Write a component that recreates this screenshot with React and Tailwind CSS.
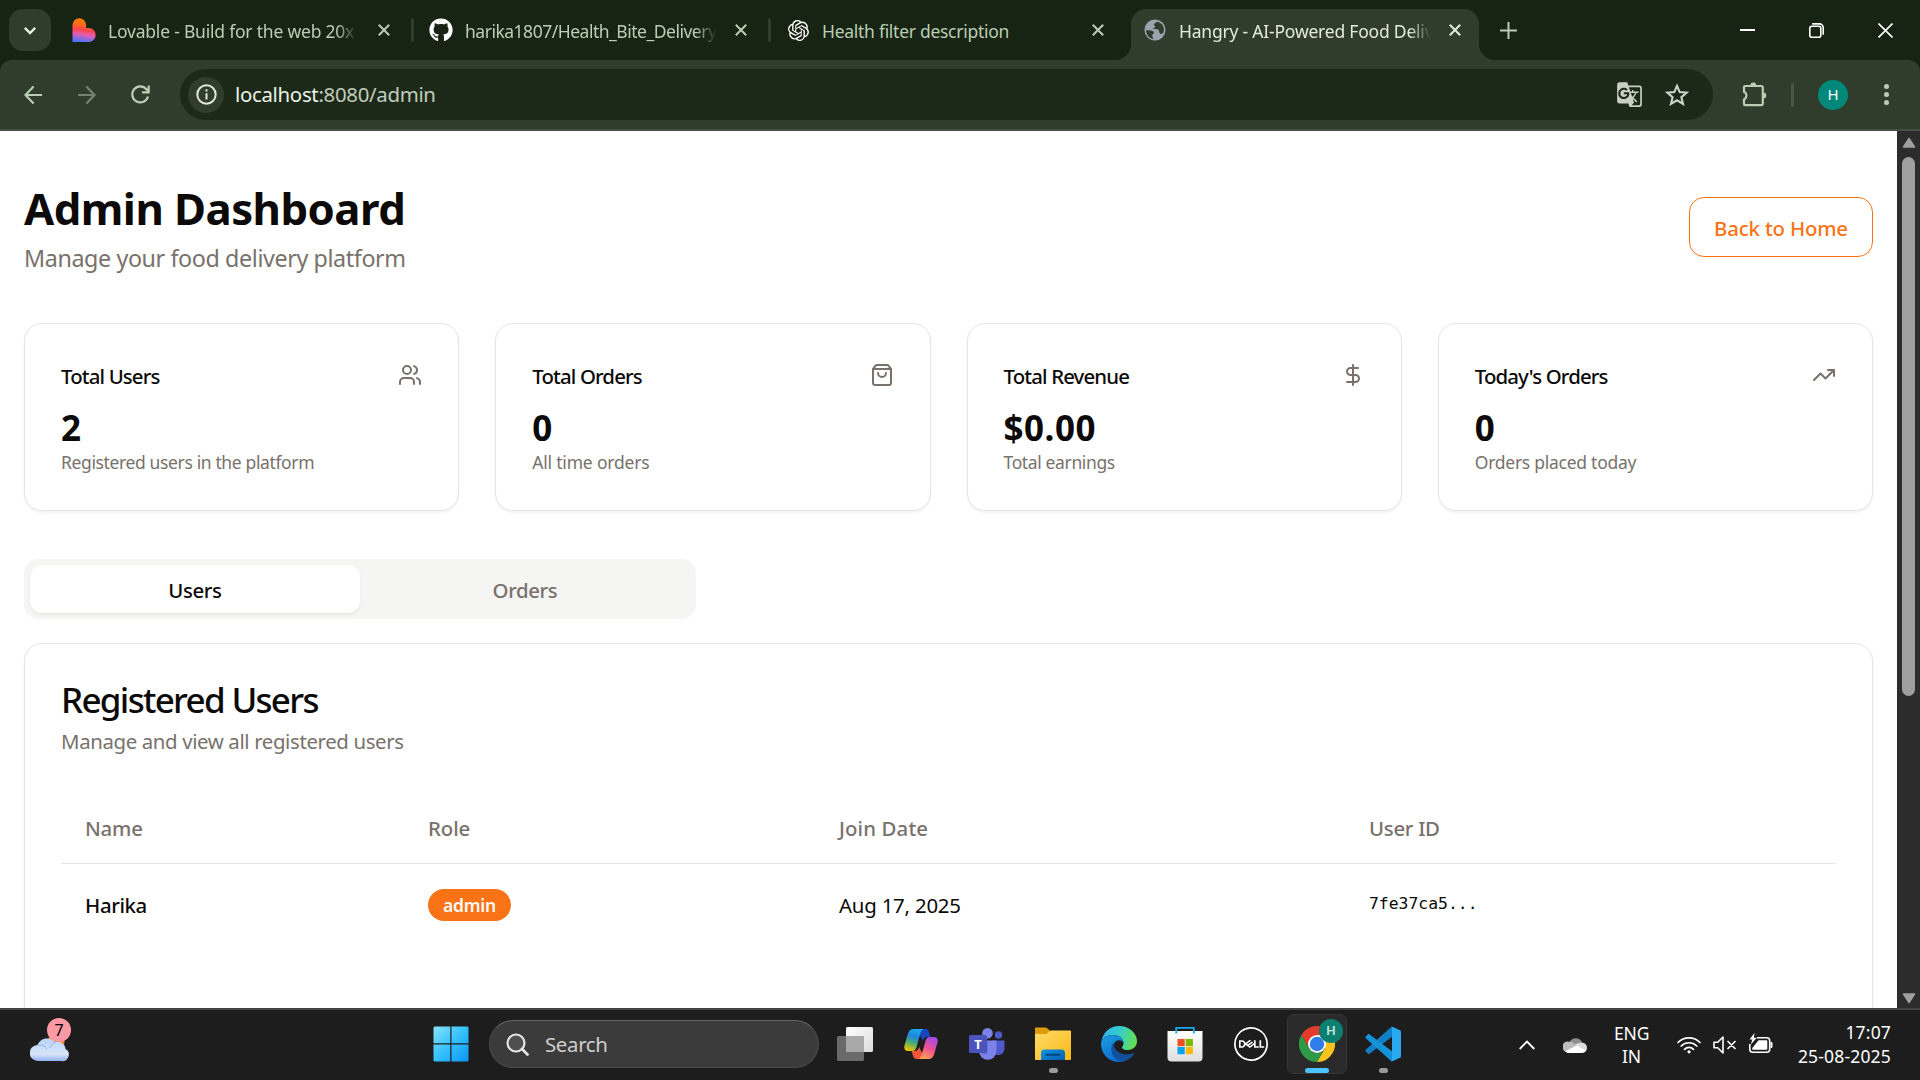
import { Users, ShoppingBag, DollarSign, TrendingUp } from "lucide-react";
import { SiOpenai, SiDell } from "react-icons/si";
import { FaGithub } from "react-icons/fa";
import { MdGTranslate } from "react-icons/md";
import clsx from "clsx";

/* ---------- Browser chrome ---------- */

function LovableIcon() {
  return (
    <svg viewBox="0 0 24 24" className="h-6 w-6 shrink-0">
      <defs>
        <linearGradient id="lov" x1="0.55" y1="0" x2="0.4" y2="1">
          <stop offset="0" stopColor="#ff8000" />
          <stop offset="0.3" stopColor="#ff6a1a" />
          <stop offset="0.5" stopColor="#ff4350" />
          <stop offset="0.68" stopColor="#e45fb0" />
          <stop offset="1" stopColor="#4b73ff" />
        </linearGradient>
      </defs>
      <path d="M0.5 7a6.8 6.8 0 0 1 13.6 0v3h2.6a7 7 0 0 1 0 14H0.5z" fill="url(#lov)" />
    </svg>
  );
}

function GlobeIcon() {
  return (
    <svg viewBox="0 0 24 24" className="h-[22px] w-[22px] shrink-0">
      <circle cx="12" cy="12" r="11.5" fill="#9ba3ad" />
      <path
        d="M2.3 12.2c3 .2 6.500-.2 8 1.300 1 1.200.3 2.600-.6 3.100-.9.500-.7 1.900-.4 3l1 2.200C5.800 21.200 2.400 17.200 2.300 12.200zM14 2.600c-.4 1.800-2.800 1.400-3.200 3.200-.3 1.500 1.600 1.200 1.500 2.600-.1 1.500-2.300 1.100-2.300 2.600 2.200.2 4.600-.4 5.900 1.100 1.200 1.500.2 3.300 1.800 4.100 1.300.6 2-.3 3.200-.8 2.500-5.200-.3-11.200-6.900-12.800z"
        fill="#303d2d"
      />
    </svg>
  );
}

function CloseGlyph({ className }) {
  return (
    <svg viewBox="0 0 12 12" className={clsx("h-3 w-3 shrink-0", className)} fill="none" stroke="currentColor" strokeWidth="2">
      <path d="M0.8 0.8l10.400 10.400M11.200 0.800L0.800 11.200" />
    </svg>
  );
}

function TabTitle({ children, fade, className }) {
  return (
    <span
      className={clsx(
        "min-w-0 flex-1 overflow-hidden pt-0.5 whitespace-nowrap text-[17.5px] leading-7",
        fade && "[mask-image:linear-gradient(to_right,black_calc(100%-22px),transparent)]",
        className
      )}
    >
      {children}
    </span>
  );
}

function Divider() {
  return <div className="h-6 w-[3px] shrink-0 rounded-full bg-[#303d2d]" />;
}

function TabStrip() {
  return (
    <div className="flex h-[60px] shrink-0 bg-[#172313] text-[#b9ceb2]">
      <div className="mt-[9px] ml-[9px] flex h-[42px] w-[42px] shrink-0 items-center justify-center rounded-[14px] bg-[#303d2d] text-[#e4eedf]">
        <svg viewBox="0 0 12 8" className="mt-px h-2 w-3" fill="none" stroke="currentColor" strokeWidth="2.400">
          <path d="M0.800 0.900L6 6.100l5.200-5.200" />
        </svg>
      </div>
      <div className="flex w-[360px] shrink-0 items-center pl-[21px]">
        <LovableIcon />
        <TabTitle fade className="ml-3 max-w-[250px] tracking-[-0.012em]">Lovable - Build for the web 20x</TabTitle>
        <CloseGlyph className="ml-5" />
      </div>
      <div className="flex items-center"><Divider /></div>
      <div className="flex w-[354px] shrink-0 items-center pl-[15px]">
        <FaGithub className="h-6 w-6 shrink-0 text-white" />
        <TabTitle fade className="ml-3 max-w-[252px] tracking-[-0.028em]">harika1807/Health_Bite_Delivery</TabTitle>
        <CloseGlyph className="ml-[18px]" />
      </div>
      <div className="flex items-center"><Divider /></div>
      <div className="flex w-[345px] shrink-0 items-center pl-[17px]">
        <SiOpenai className="h-[21px] w-[21px] shrink-0 text-white" />
        <TabTitle className="ml-[13px] max-w-[270px] tracking-[-0.016em]">Health filter description</TabTitle>
        <CloseGlyph />
      </div>
      <div className="flex items-end">
        <div className="h-[15px] w-[15px] bg-[radial-gradient(circle_at_0_0,transparent_14.500px,#303d2d_15px)]" />
        <div className="flex h-[51px] w-[348px] items-center rounded-t-[15px] bg-[#303d2d] pb-[9px] pl-[13px] text-[#e0ebdb]">
          <GlobeIcon />
          <TabTitle fade className="ml-[13px] max-w-[252px] tracking-[-0.012em]">Hangry - AI-Powered Food Deliv</TabTitle>
          <CloseGlyph className="ml-[18px]" />
        </div>
        <div className="h-[15px] w-[15px] bg-[radial-gradient(circle_at_100%_0,transparent_14.500px,#303d2d_15px)]" />
      </div>
      <div className="flex flex-1 items-center pl-[6px]">
        <svg viewBox="0 0 17 17" className="h-[17px] w-[17px]" fill="none" stroke="currentColor" strokeWidth="2">
          <path d="M8.500 0v17M0 8.500h17" />
        </svg>
      </div>
      <div className="mr-[27px] flex items-center gap-[54px] text-white">
        <div className="h-[2px] w-[15px] bg-white" />
        <svg viewBox="0 0 15 15" className="h-[15px] w-[15px]" fill="none" stroke="currentColor" strokeWidth="1.600">
          <rect x="0.800" y="3.200" width="11" height="11" rx="2" />
          <path d="M3.200 0.900h7.300a3.700 3.700 0 0 1 3.700 3.700v7.200" />
        </svg>
        <svg viewBox="0 0 15 15" className="h-[15px] w-[15px]" fill="none" stroke="currentColor" strokeWidth="1.600">
          <path d="M0.500 0.500l14 14M14.500 0.500l-14 14" />
        </svg>
      </div>
    </div>
  );
}

function Toolbar() {
  return (
    <div className="shrink-0 bg-[#172313]">
      <div className="flex h-[71px] items-center rounded-t-[12px] border-b-2 border-[#445041] bg-[#303d2d] text-[#b9ceb2]">
        <svg viewBox="0 0 18 20" className="ml-6 h-5 w-[18px]" fill="none" stroke="currentColor" strokeWidth="2.200">
          <path d="M18 10H1.800M9.600 1.600L1.500 10l8.100 8.400" />
        </svg>
        <svg viewBox="0 0 18 20" className="ml-9 h-5 w-[18px] text-[#76836f]" fill="none" stroke="currentColor" strokeWidth="2.200">
          <path d="M0 10h16.200M8.400 1.600l8.100 8.400-8.100 8.400" />
        </svg>
        <svg viewBox="0 0 19 19" className="ml-[35px] h-[19px] w-[19px]" fill="none" stroke="currentColor" strokeWidth="2.200">
          <path d="M17 11.500A8 8 0 1 1 15.500 4.300L17.600 7M17.700 0.500V7.300H11" />
        </svg>
        <div className="ml-[30px] flex h-[51px] w-[1533px] items-center rounded-full bg-[#1c2919] pl-2">
          <div className="flex h-9 w-9 items-center justify-center rounded-full bg-[#303d2d] text-[#dfe8da]">
            <svg viewBox="0 0 21 21" className="h-[21px] w-[21px]" fill="none" stroke="currentColor" strokeWidth="2">
              <circle cx="10.500" cy="10.500" r="9.200" />
              <path d="M10.500 9.300v6.200M10.500 5.300v2.200" />
            </svg>
          </div>
          <div className="ml-[11px] flex-1 text-[20.400px] tracking-[-0.015em] text-[#c1ccbc]">
            <span className="text-[#eaf3e5]">localhost</span>:8080/admin
          </div>
          <MdGTranslate className="h-[27px] w-[27px] text-[#c7cfc2]" />
          <svg viewBox="0 0 24 23" className="mr-[24px] ml-[22px] h-[23px] w-6" fill="none" stroke="#cdd5c8" strokeWidth="2.100">
            <path d="M12 2.800l2.700 6.300 6.900.6-5.200 4.500 1.600 6.700L12 17.300l-6 3.600 1.600-6.700-5.200-4.500 6.900-.6z" />
          </svg>
        </div>
        <svg viewBox="0 0 25 25" className="ml-[29px] h-[25px] w-[25px] shrink-0" fill="none" stroke="currentColor" strokeWidth="2.200">
          <path d="M3.200 4h16a1.600 1.600 0 0 1 1.600 1.600v16a1.600 1.600 0 0 1-1.600 1.600h-16a1.200 1.200 0 0 1-1.200-1.200v-4.600a4.200 4.200 0 0 0 0-7.600V5.200A1.200 1.200 0 0 1 3.200 4z" />
          <path d="M8.300 3.500a3 3 0 0 1 6 0zM21.300 10.500a3 3 0 0 1 0 6z" fill="currentColor" stroke="none" />
        </svg>
        <div className="ml-6 h-6 w-[3px] shrink-0 rounded-full bg-[#48573f]" />
        <div className="ml-6 flex h-[30px] w-[30px] shrink-0 items-center justify-center rounded-full bg-[#00897b] text-[15px] text-white">H</div>
        <div className="ml-9 flex flex-col gap-[3px]">
          <i className="h-[5px] w-[5px] rounded-full bg-[#b9ceb2]" />
          <i className="h-[5px] w-[5px] rounded-full bg-[#b9ceb2]" />
          <i className="h-[5px] w-[5px] rounded-full bg-[#b9ceb2]" />
        </div>
      </div>
    </div>
  );
}

/* ---------- Admin page ---------- */

const stats = [
  { title: "Total Users", value: "2", note: "Registered users in the platform", Icon: Users, track: "tracking-[-0.021em]" },
  { title: "Total Orders", value: "0", note: "All time orders", Icon: ShoppingBag, track: "tracking-[-0.011em]" },
  { title: "Total Revenue", value: "$0.00", note: "Total earnings", Icon: DollarSign, track: "tracking-[-0.021em]" },
  { title: "Today's Orders", value: "0", note: "Orders placed today", Icon: TrendingUp, track: "tracking-[-0.015em]" },
];

function StatCard({ title, value, note, Icon, track }) {
  return (
    <div className="h-[188px] rounded-[18px] border border-[#e6e5e4] bg-white px-9 pt-9 shadow-[0_1.500px_3px_rgba(0,0,0,0.05)]">
      <div className="flex h-[30px] items-center justify-between">
        <h3 className="pt-0.5 text-[20.400px] font-medium tracking-[-0.042em]">{title}</h3>
        <Icon className="h-6 w-6 text-[#78716c]" />
      </div>
      <div className="mt-[14px] text-[35px] leading-[48px] font-bold tracking-[0.015em]">{value}</div>
      <p className={clsx("-mt-0.5 text-[17.500px] leading-6 text-[#78716c]", track)}>{note}</p>
    </div>
  );
}

function AdminPage() {
  return (
    <main className="min-w-0 flex-1 overflow-hidden bg-white px-6 pt-12 text-[#0c0a09]">
      <header className="flex h-24 items-center justify-between">
        <div>
          <h1 className="pt-0.5 text-[43.700px] leading-[54px] font-bold tracking-[-0.012em]">Admin Dashboard</h1>
          <p className="mt-[5px] text-[23.300px] leading-9 tracking-[-0.017em] text-[#78716c]">Manage your food delivery platform</p>
        </div>
        <button className="h-[60px] w-[184px] rounded-[15px] border border-[#f97316] pt-0.5 text-[20.400px] font-medium tracking-[-0.009em] text-[#f97316]">
          Back to Home
        </button>
      </header>

      <section className="mt-12 grid grid-cols-4 gap-9">
        {stats.map((s) => (
          <StatCard key={s.title} {...s} />
        ))}
      </section>

      <div className="mt-12 grid h-[60px] w-[672px] grid-cols-2 rounded-[15px] bg-[#f5f5f4] p-1.5 text-[20.400px] font-medium tracking-[-0.019em]">
        <div className="flex items-center justify-center rounded-[12px] bg-white pt-0.5 shadow-[0_1.500px_3px_rgba(0,0,0,0.06)]">Users</div>
        <div className="flex items-center justify-center pt-0.5 text-[#78716c]">Orders</div>
      </div>

      <section className="mt-6 h-[420px] rounded-[18px] border border-[#e6e5e4] bg-white p-9 shadow-[0_1.500px_3px_rgba(0,0,0,0.05)]">
        <h2 className="pt-0.5 text-[35px] leading-9 font-medium tracking-[-0.048em]">Registered Users</h2>
        <p className="mt-2 text-[20.400px] leading-[30px] tracking-[-0.018em] text-[#78716c]">Manage and view all registered users</p>
        <table className="mt-[35px] w-full table-fixed text-left text-[20.400px]">
          <colgroup>
            <col className="w-[343px]" />
            <col className="w-[410px]" />
            <col className="w-[532px]" />
            <col />
          </colgroup>
          <thead>
            <tr className="h-[72px] border-b border-[#e6e5e4] text-[#78716c]">
              <th className="px-6 pt-[3px] font-medium tracking-[-0.010em]">Name</th>
              <th className="px-6 pt-[3px] font-medium tracking-[-0.004em]">Role</th>
              <th className="px-[25px] pt-[3px] font-medium tracking-[0.006em]">Join Date</th>
              <th className="px-[23px] pt-[3px] font-medium tracking-[-0.014em]">User ID</th>
            </tr>
          </thead>
          <tbody>
            <tr className="h-[83px]">
              <td className="px-6 pt-0.5 font-medium tracking-[-0.018em]">Harika</td>
              <td className="px-6">
                <span className="flex h-8 w-[83px] items-center justify-center rounded-full bg-[#f97316] text-[17.500px] font-semibold tracking-[-0.015em] text-[#fafaf9]">admin</span>
              </td>
              <td className="px-[25px] pt-0.5 tracking-[-0.010em]">Aug 17, 2025</td>
              <td className="px-[23px] font-['DejaVu_Sans_Mono',monospace] text-[16.400px]">7fe37ca5...</td>
            </tr>
          </tbody>
        </table>
      </section>
    </main>
  );
}

function Scrollbar() {
  return (
    <div className="flex w-[23px] shrink-0 flex-col items-center bg-[#2c2c2c] pt-1.5 pb-[4px]">
      <svg viewBox="0 0 14 11" className="h-[11px] w-[14px] shrink-0">
        <path d="M1.500 10L7 1.500 12.500 10z" fill="#9f9f9f" stroke="#9f9f9f" strokeWidth="1.500" strokeLinejoin="round" />
      </svg>
      <div className="mt-[9px] h-[539px] w-[13px] rounded-full bg-[#9f9f9f]" />
      <svg viewBox="0 0 14 11" className="mt-auto h-[11px] w-[14px] shrink-0">
        <path d="M1.500 1L7 9.500 12.500 1z" fill="#9f9f9f" stroke="#9f9f9f" strokeWidth="1.500" strokeLinejoin="round" />
      </svg>
    </div>
  );
}

/* ---------- Taskbar icons ---------- */

function WeatherIcon() {
  return (
    <div className="relative ml-[30px] h-[46px] w-[42px]">
      <svg viewBox="0 0 42 46" className="h-full w-full">
        <defs>
          <linearGradient id="cl" x1="0" y1="0" x2="0" y2="1">
            <stop offset="0" stopColor="#bcd4fa" />
            <stop offset="0.700" stopColor="#d7e4f9" />
            <stop offset="1" stopColor="#8db0f0" />
          </linearGradient>
        </defs>
        <circle cx="26" cy="26" r="8.500" fill="#f58220" />
        <path d="M8 45a8 8 0 0 1-.6-16A10.500 10.500 0 0 1 25 26a8 8 0 0 1 10.500 7A6.500 6.500 0 0 1 31 45z" fill="url(#cl)" />
        <path d="M8 29.500c3-1 7 0 9 3.500M20 32c.5-3 3-5.500 6-6" fill="none" stroke="#93b3ee" strokeWidth="1" />
      </svg>
      <span className="absolute top-0.5 left-[17px] flex h-6 w-6 items-center justify-center rounded-full bg-[#ff99a4] text-[16px] text-black">7</span>
    </div>
  );
}

function StartIcon() {
  return (
    <svg viewBox="0 0 36 36" className="h-9 w-9">
      <defs>
        <linearGradient id="win" x1="0" y1="0" x2="36" y2="36" gradientUnits="userSpaceOnUse">
          <stop offset="0" stopColor="#8ae3ff" />
          <stop offset="0.500" stopColor="#35c1fb" />
          <stop offset="1" stopColor="#0a93f8" />
        </linearGradient>
      </defs>
      <path d="M1.500 0.500h15.800v16.800H0.500V1.500zM18.500 0.500h16l1 1v15.800H18.500zM0.500 18.500h16.800v17H1.500l-1-1zM18.500 18.500h17v16l-1 1h-16z" fill="url(#win)" />
    </svg>
  );
}

function TaskViewIcon() {
  return (
    <svg viewBox="0 0 36 36" className="h-9 w-9">
      <defs>
        <linearGradient id="tv" x1="0" y1="0" x2="1" y2="1">
          <stop offset="0" stopColor="#fff" />
          <stop offset="1" stopColor="#dcdcdc" />
        </linearGradient>
      </defs>
      <rect x="9" y="1" width="27" height="25" rx="1.500" fill="url(#tv)" />
      <rect x="0" y="10" width="27" height="25" rx="1.500" fill="#6a6a6a" />
      <rect x="9" y="10" width="18" height="16" fill="#a9a9a9" />
    </svg>
  );
}

function CopilotIcon() {
  return (
    <svg viewBox="0 0 34 32" className="h-8 w-[34px]">
      <defs>
        <linearGradient id="cpA" x1="0.600" y1="0" x2="0.300" y2="1">
          <stop offset="0" stopColor="#1fa8ee" />
          <stop offset="0.350" stopColor="#1c84dc" />
          <stop offset="0.650" stopColor="#4fb06a" />
          <stop offset="1" stopColor="#f5c400" />
        </linearGradient>
        <linearGradient id="cpB" x1="0.700" y1="0" x2="0.300" y2="1">
          <stop offset="0" stopColor="#a14be8" />
          <stop offset="0.500" stopColor="#ee5092" />
          <stop offset="1" stopColor="#ffa353" />
        </linearGradient>
      </defs>
      <path d="M15 1h6.500c2 0 3 1.400 3.500 3l1.300 5h-2.500c-3 0-4.200 1.500-5 4L15.500 6z" fill="#1746c0" />
      <path d="M19 31h-6.500c-2 0-3-1.400-3.500-3l-1.300-5h2.500c3 0 4.200-1.500 5-4l3.300 7z" fill="#f2553a" />
      <path d="M9.500 1H20c-2 .5-3 2-3.600 4.200L12.500 19c-.8 2.800-2 4-4.500 4H4c-3 0-4.300-2.400-3.500-5.500L4 5.500C4.900 2.600 6.500 1 9.500 1z" fill="url(#cpA)" />
      <path d="M24.500 31H14c2-.5 3-2 3.600-4.200L21.500 13c.8-2.800 2-4 4.500-4h4c3 0 4.300 2.400 3.500 5.500L30 26.500c-.9 2.900-2.500 4.500-5.500 4.500z" fill="url(#cpB)" />
    </svg>
  );
}

function TeamsIcon() {
  return (
    <div className="relative h-[34px] w-9">
      <svg viewBox="0 0 36 34" className="h-full w-full">
        <circle cx="29.500" cy="8" r="3.700" fill="#5059c9" />
        <path d="M23 13.500h11.500c.6 0 1 .4 1 1V22a6.500 6.500 0 0 1-12.500 2z" fill="#5059c9" />
        <circle cx="18.500" cy="6.300" r="5.300" fill="#7b83eb" />
        <path d="M10 13.500h16.500c.6 0 1 .4 1 1V24a8.700 8.700 0 0 1-17.500 0z" fill="#7b83eb" />
        <path d="M12 13.500h7v13a1 1 0 0 1-1 1h-6z" fill="#5b63cf" opacity="0.500" />
        <rect x="0" y="8" width="18" height="18" rx="1.500" fill="#4b53bc" />
      </svg>
      <span className="absolute top-2 left-0 flex h-[18px] w-[18px] items-center justify-center text-[13px] leading-none font-bold text-white">T</span>
    </div>
  );
}

function ExplorerIcon() {
  return (
    <svg viewBox="0 0 36 34" className="h-[34px] w-9">
      <defs>
        <linearGradient id="fx" x1="0" y1="0" x2="1" y2="1">
          <stop offset="0" stopColor="#ffdc6b" />
          <stop offset="1" stopColor="#fbb814" />
        </linearGradient>
        <linearGradient id="fb" x1="0" y1="0" x2="1" y2="1">
          <stop offset="0" stopColor="#1394e4" />
          <stop offset="1" stopColor="#0560b0" />
        </linearGradient>
      </defs>
      <path d="M0 1.500C0 .9.400.5 1 .5h9.500c.6 0 1 .2 1.400.6L15.500 4v5H0z" fill="#dd9b0c" />
      <path d="M0 7h10.500c.9 0 1.600-.3 2.200-.9l2-2c.4-.4.900-.6 1.500-.6H35c.6 0 1 .4 1 1V32c0 .6-.4 1-1 1H1c-.6 0-1-.4-1-1z" fill="url(#fx)" />
      <path d="M6 33v-7a3.500 3.500 0 0 1 3.500-3.500h17A3.500 3.500 0 0 1 30 26v7z" fill="url(#fb)" />
      <rect x="10.500" y="26.700" width="15" height="2" rx="1" fill="#06467f" />
    </svg>
  );
}

function EdgeIcon() {
  return (
    <svg viewBox="0 0 36 36" className="h-9 w-9">
      <defs>
        <linearGradient id="eg1" x1="0" y1="0.400" x2="1" y2="0.600">
          <stop offset="0" stopColor="#2fb4ee" />
          <stop offset="0.500" stopColor="#38cfc6" />
          <stop offset="1" stopColor="#66e04c" />
        </linearGradient>
        <linearGradient id="eg2" x1="0" y1="0" x2="0.500" y2="1">
          <stop offset="0" stopColor="#1b9de2" />
          <stop offset="1" stopColor="#0c6fd0" />
        </linearGradient>
      </defs>
      <path d="M0.600 14.500C2.200 6 9.500 0 18 0c10.500 0 18 7.500 18 15 0 5.500-4 9-9 9-3.800 0-6-1.300-6-2.600 0-1 1.500-1.600 1.500-4.200 0-4-4-8.200-10.500-8.200-6 0-9.800 2.600-11.400 5.500z" fill="url(#eg1)" />
      <path d="M0 18c0-5.500 5-9 11.500-9 6 0 10.500 3.500 11 7.500-1-1.500-2.600-2.300-4.500-2.300-3.500 0-5.500 3-5.500 6.500 0 8 6 13.300 12.500 13.300-2 1.300-4.500 2-7 2C8 36 0 28 0 18z" fill="url(#eg2)" />
      <path d="M12.500 16.500C10.500 19 10 22 10.500 25c1 6 6 10.500 10.500 10.700 5-.7 9.500-3.700 12-8 .3-.6-.2-1-.8-.7-2 1-4 1.400-6.200 1.400-7 0-13.500-4-13.500-11.900z" fill="#11509a" />
    </svg>
  );
}

function StoreIcon() {
  return (
    <svg viewBox="0 0 36 36" className="h-9 w-9">
      <defs>
        <linearGradient id="st" x1="0" y1="0" x2="0" y2="1">
          <stop offset="0" stopColor="#fff" />
          <stop offset="1" stopColor="#dedede" />
        </linearGradient>
      </defs>
      <path d="M0.500 5h35v26.500a4 4 0 0 1-4 4h-27a4 4 0 0 1-4-4z" fill="url(#st)" />
      <path d="M9.200 7.500V1.800h17.600v5.700" fill="none" stroke="#1ba7ee" strokeWidth="1.800" />
      <rect x="10.500" y="13" width="7.200" height="7.200" fill="#f25022" />
      <rect x="18.700" y="13" width="7.200" height="7.200" fill="#7fba00" />
      <rect x="10.500" y="21" width="7.200" height="7.200" fill="#00a4ef" />
      <rect x="18.700" y="21" width="7.200" height="7.200" fill="#ffb900" />
    </svg>
  );
}

function ChromeIcon() {
  return (
    <div className="relative h-9 w-9">
      <svg viewBox="0 0 36 36" className="h-9 w-9">
        <path d="M18 9h15.600A18 18 0 0 0 2.400 9l7.800 13.500z" fill="#e33b2e" />
        <path d="M18 9h15.600A18 18 0 0 1 18 36l7.800-13.500z" fill="#fcc31e" />
        <path d="M25.800 22.500L18 36A18 18 0 0 1 2.400 9l7.800 13.500a9 9 0 0 0 15.600 0z" fill="#2c9a46" />
        <circle cx="18" cy="18" r="9" fill="#fff" />
        <circle cx="18" cy="18" r="7.200" fill="#2f7de9" />
      </svg>
      <span className="absolute -top-[7px] left-5 flex h-6 w-6 items-center justify-center rounded-full bg-[#0b8071] text-[13px] font-semibold text-[#c5e6e0]">H</span>
    </div>
  );
}

function VSCodeIcon() {
  return (
    <svg viewBox="0 0 36 36" className="h-9 w-9">
      <path d="M27 .3L1 23.600c-.9.800-.9 1.400-.2 2l2 1.900c.6.500 1.200.5 1.900.1L27 10.800z" fill="#1080c4" />
      <path d="M27 35.700L1 12.400c-.9-.8-.9-1.400-.2-2l2-1.900c.6-.5 1.200-.5 1.900-.1L27 25.200z" fill="#1492d8" />
      <path d="M26.300 0.200l8.200 3.700c.9.400 1.500 1.200 1.500 2.200v23.800c0 1-.6 1.800-1.500 2.200l-8.200 3.700c-.3.100.7-.4.700-1.600V1.800c0-1.200-1-1.700-.7-1.600z" fill="#28a9f2" />
    </svg>
  );
}

const apps = [
  { id: "taskview", Icon: TaskViewIcon },
  { id: "copilot", Icon: CopilotIcon },
  { id: "teams", Icon: TeamsIcon },
  { id: "explorer", Icon: ExplorerIcon, open: true },
  { id: "edge", Icon: EdgeIcon },
  { id: "store", Icon: StoreIcon },
  { id: "dell", Icon: () => <SiDell className="h-[34px] w-[34px] text-white" /> },
  { id: "chrome", Icon: ChromeIcon, active: true },
  { id: "vscode", Icon: VSCodeIcon, open: true },
];

function Taskbar() {
  return (
    <div className="flex h-[72px] shrink-0 items-center border-t-2 border-[#434343] bg-[#1d1d1d] text-[17.500px] text-white">
      <div className="flex w-[433px] self-start pt-[6px]">
        <WeatherIcon />
      </div>
      <div className="flex items-center pb-0.5">
        <StartIcon />
        <div className="ml-5 flex h-12 w-[330px] items-center rounded-full border-[1.500px] border-[#4a4a4a] border-t-[#646464] bg-[#3b3b3b] pl-4">
          <svg viewBox="0 0 23 23" className="h-[23px] w-[23px]" fill="none" stroke="#e6e6e6" strokeWidth="2.200">
            <circle cx="10" cy="10" r="8.500" fill="#4f4f4f" />
            <path d="M16 16l5.500 5.500" strokeLinecap="round" strokeWidth="2.800" />
          </svg>
          <span className="ml-4 text-[20.400px] tracking-[-0.016em] text-[#cfcfcf]">Search</span>
        </div>
      </div>
      <div className="ml-[3px] flex h-full">
        {apps.map(({ id, Icon, open, active }) => (
          <div key={id} className="flex w-[66px] items-start justify-center pt-1">
            <div
              className={clsx(
                "relative flex h-[60px] w-[60px] items-center justify-center rounded-[7px]",
                active && "border border-[#373737] bg-[#2a2a2a]"
              )}
            >
              <Icon />
              {open && <i className="absolute bottom-[1px] h-[5px] w-[9px] rounded-full bg-[#9a9a9a]" />}
              {active && <i className="absolute bottom-0 h-[5px] w-6 rounded-full bg-[#4cc2ff]" />}
            </div>
          </div>
        ))}
      </div>
      <div className="ml-auto flex items-center pb-px">
        <svg viewBox="0 0 16 10" className="h-[10px] w-4" fill="none" stroke="white" strokeWidth="1.800">
          <path d="M0.700 9L8 1.500 15.300 9" />
        </svg>
        <svg viewBox="0 0 24 16" className="ml-7 h-4 w-6">
          <path d="M6.500 5a7 7 0 0 1 12.800.8L10 12z" fill="#8e8e8e" />
          <path d="M5.500 4.700c2-.2 3.500.4 5 1.300l5 3-12 6A5.200 5.200 0 0 1 5.500 4.700z" fill="#bdbdbd" />
          <path d="M19 5.800c3 0 5 2.300 5 5 0 1.300-.4 2.300-1 3L12 7.500c2.500-1.300 4.500-1.800 7-1.700z" fill="#dcdcdc" />
          <path d="M2.200 14.200L14 8.200l9.300 5.300c-.9 1.500-2.400 2.500-4.300 2.500H5.500c-1.300 0-2.400-.7-3.300-1.800z" fill="#fff" />
        </svg>
        <div className="ml-[27px] w-[35px] text-center leading-[23px] tracking-[-0.010em]">
          <div>ENG</div>
          <div>IN</div>
        </div>
        <svg viewBox="0 0 24 18" className="ml-[28px] h-[18px] w-6" fill="none" stroke="white" strokeWidth="1.700" strokeLinecap="round">
          <path d="M1 6.500a15.500 15.500 0 0 1 22 0M4.200 10a11 11 0 0 1 15.600 0M7.500 13.300a6.400 6.400 0 0 1 9 0" />
          <circle cx="12" cy="15.800" r="1.600" fill="white" stroke="none" />
        </svg>
        <svg viewBox="0 0 24 18" className="ml-3 h-[18px] w-6" fill="none" stroke="white" strokeWidth="1.600" strokeLinejoin="round">
          <path d="M1 6.200h3.700L10 1v16l-5.300-5.200H1zM14.500 5l8 8M22.500 5l-8 8" />
        </svg>
        <svg viewBox="0 0 24 20" className="mb-[3px] ml-3 h-5 w-6" fill="none" stroke="white" strokeWidth="1.600">
          <path d="M8 4.800h9.700a3 3 0 0 1 3 3v8.400a3 3 0 0 1-3 3H3.800a3 3 0 0 1-3-3V11" />
          <path d="M21.500 9h.8c.7 0 1.200.5 1.200 1.200v3.600c0 .7-.5 1.200-1.200 1.200h-.8z" fill="white" stroke="none" />
          <path d="M9.500 7.200h7.800c.6 0 1 .4 1 1v7.600c0 .6-.4 1-1 1H4.200c-.6 0-1-.4-1-1v-.6z" fill="white" stroke="none" />
          <path d="M5.500 0L0.500 6.500h2.800L1.800 11.500 7.800 4.800H4.800z" fill="white" stroke="none" />
        </svg>
        <div className="mr-[29px] ml-[23px] w-[95px] pb-px text-right leading-6 tracking-[0.010em]">
          <div>17:07</div>
          <div>25-08-2025</div>
        </div>
      </div>
    </div>
  );
}

export default function App() {
  return (
    <div className="flex h-[1080px] w-[1920px] flex-col overflow-hidden bg-[#1d1d1d] font-['Noto_Sans','Open_Sans',sans-serif]">
      <TabStrip />
      <Toolbar />
      <div className="flex h-[877px] min-h-0 shrink-0">
        <AdminPage />
        <Scrollbar />
      </div>
      <Taskbar />
    </div>
  );
}
